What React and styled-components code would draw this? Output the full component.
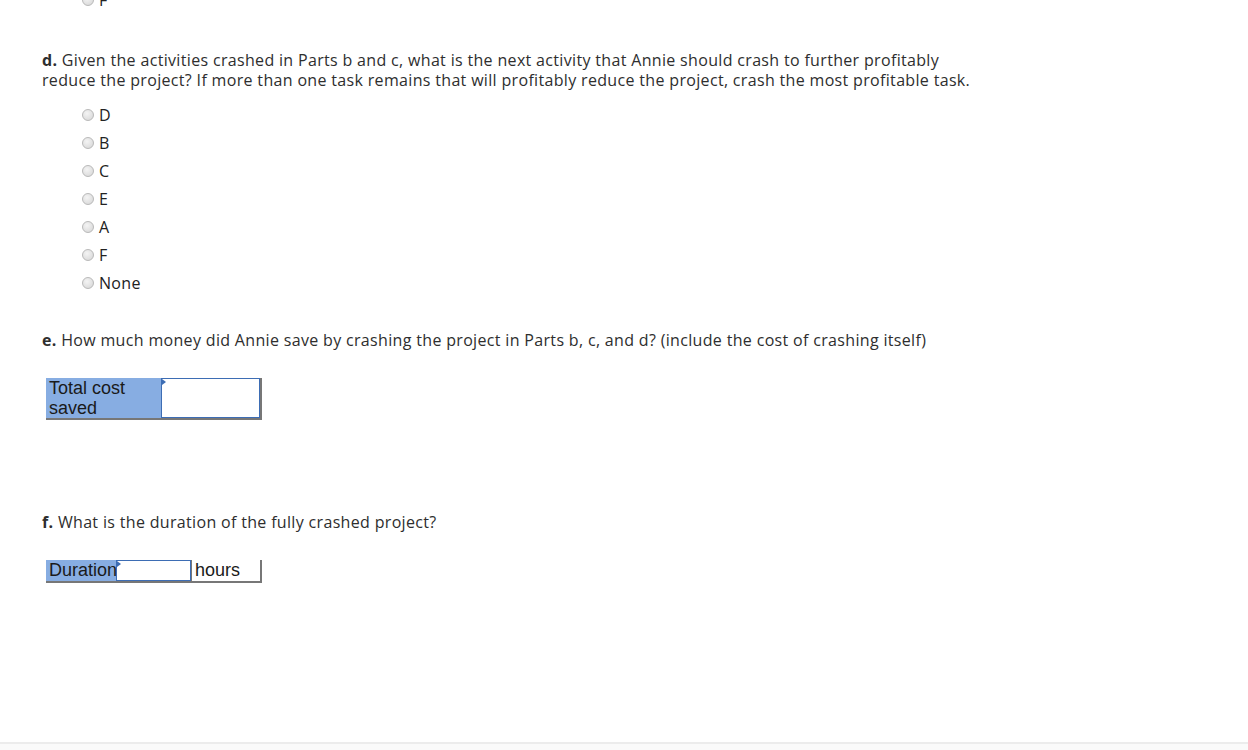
import styled, { createGlobalStyle } from "styled-components";

const GlobalStyle = createGlobalStyle`
  html, body {
    margin: 0;
    padding: 0;
    background: #ffffff;
  }
  body {
    font-family: "Open Sans", Lato, sans-serif;
    color: #333333;
    overflow: hidden;
  }
`;

const dOptions = ["D", "B", "C", "E", "A", "F", "None"];

const Radio = ({ label }) => (
  <OptionRow>
    <Circle />
    <span>{label}</span>
  </OptionRow>
);

const App = () => {
  return (
    <Page>
      <GlobalStyle />
      <Content>
        <TopStub>
          <Radio label="F" />
        </TopStub>

        <Question $top={36}>
          <b>d.</b> Given the activities crashed in Parts b and c, what is the
          next activity that Annie should crash to further profitably
          <br />
          reduce the project? If more than one task remains that will
          profitably reduce the project, crash the most profitable task.
        </Question>
        <Options>
          {dOptions.map((o) => (
            <Radio key={o} label={o} />
          ))}
        </Options>

        <Question $top={33}>
          <b>e.</b> How much money did Annie save by crashing the project in
          Parts b, c, and d? (include the cost of crashing itself)
        </Question>
        <AnswerTable $top={28}>
          <LabelCell $width={115} $height={40}>
            Total cost
            <br />
            saved
          </LabelCell>
          <InputCell $width={99} />
        </AnswerTable>

        <Question $top={92}>
          <b>f.</b> What is the duration of the fully crashed project?
        </Question>
        <AnswerTable $top={28}>
          <LabelCell $width={70} $height={21}>
            Duration
          </LabelCell>
          <InputCell $width={75} />
          <UnitCell>hours</UnitCell>
        </AnswerTable>
      </Content>
      <Footer />
    </Page>
  );
};

const Page = styled.div`
  height: 750px;
  display: flex;
  flex-direction: column;
  overflow: hidden;
`;

const Content = styled.div`
  flex: 1;
  padding-left: 42px;
  display: flex;
  flex-direction: column;
  align-items: flex-start;
  background: #ffffff;
`;

const TopStub = styled.div`
  margin-top: -14px;
  padding-left: 40px;
`;

const Question = styled.p`
  margin: ${(p) => p.$top}px 0 0;
  font-size: 16px;
  line-height: 20px;
  letter-spacing: 0.33px;
  color: #2e2e2e;
  b {
    font-weight: 700;
  }
`;

const Options = styled.div`
  margin-top: 11px;
  padding-left: 40px;
  display: flex;
  flex-direction: column;
`;

const OptionRow = styled.label`
  display: flex;
  align-items: center;
  height: 28px;
  gap: 5px;
  font-size: 16px;
  letter-spacing: 0.3px;
  color: #222222;
`;

const Circle = styled.span`
  width: 10px;
  height: 10px;
  border-radius: 50%;
  border: 1px solid #b9b9b9;
  background: radial-gradient(circle at 40% 35%, #f4f4f4, #d4d4d4);
`;

const AnswerTable = styled.div`
  margin-top: ${(p) => p.$top}px;
  margin-left: 4px;
  display: flex;
  border-right: 2px solid #777777;
  border-bottom: 2px solid #777777;
  font-family: "Liberation Sans", Arial, sans-serif;
  font-size: 18px;
  line-height: 20px;
  color: #1a1a1a;
`;

const LabelCell = styled.div`
  width: ${(p) => p.$width}px;
  height: ${(p) => p.$height}px;
  box-sizing: border-box;
  padding: 0 0 0 3px;
  background: #87ade2;
  white-space: nowrap;
  overflow: hidden;
`;

const InputCell = styled.div`
  position: relative;
  width: ${(p) => p.$width}px;
  box-sizing: border-box;
  border: 1px solid #3d6db4;
  background: #ffffff;
  &::before {
    content: "";
    position: absolute;
    top: 0;
    left: 0;
    border-top: 3px solid transparent;
    border-bottom: 3px solid transparent;
    border-left: 4px solid #3d6db4;
  }
`;

const UnitCell = styled.div`
  width: 69px;
  box-sizing: border-box;
  padding: 0 0 0 3px;
  border-left: 1px solid #777777;
  background: #ffffff;
`;

const Footer = styled.div`
  height: 6px;
  border-top: 2px solid #ececec;
  background: #fafafa;
`;

export default App;
